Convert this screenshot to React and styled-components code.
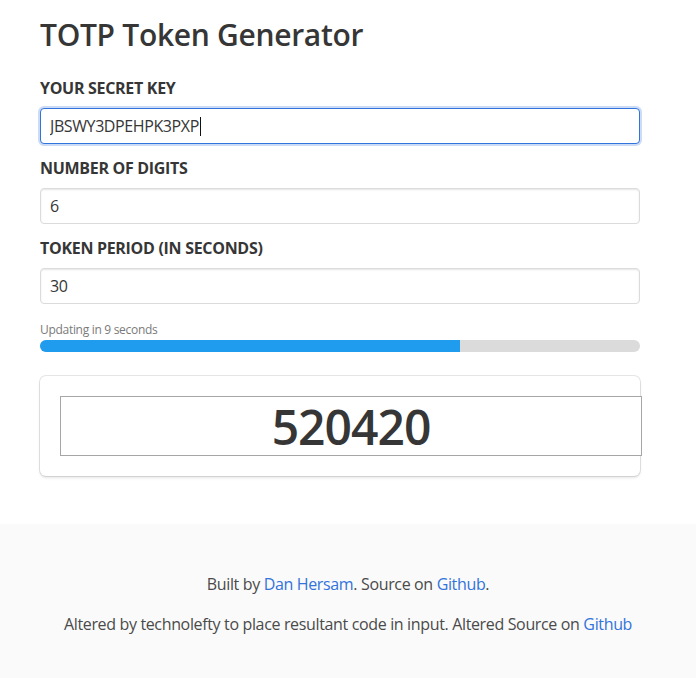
import React from 'react';
import styled, { createGlobalStyle } from 'styled-components';

const GlobalStyle = createGlobalStyle`
  html, body {
    margin: 0;
    padding: 0;
    background: #fff;
  }

  body {
    font-family: 'Open Sans', 'Noto Sans', sans-serif;
    font-size: 16px;
    line-height: 1.5;
    color: #4a4a4a;
  }

  * {
    box-sizing: border-box;
  }
`;

const Page = styled.div`
  min-height: 678px;
  display: flex;
  flex-direction: column;
`;

const Main = styled.section`
  width: 600px;
  margin-left: 40px;
  padding: 17px 0 48px;
`;

const Title = styled.h1`
  margin: 0 0 23px;
  font-size: 30px;
  line-height: 36px;
  font-weight: 600;
  letter-spacing: -0.3px;
  color: #363636;
`;

const Field = styled.div`
  margin-bottom: 12px;
`;

const Label = styled.label`
  display: block;
  margin-bottom: 8px;
  font-size: 16px;
  font-weight: 700;
  letter-spacing: -0.3px;
  text-transform: uppercase;
  color: #363636;
`;

const Control = styled.div`
  position: relative;
`;

const Caret = styled.span`
  position: absolute;
  left: 160px;
  top: 9px;
  width: 1px;
  height: 19px;
  background: #111;
`;

const Input = styled.input`
  display: block;
  width: 100%;
  height: 36px;
  padding: 0 9px;
  font-family: inherit;
  font-size: 16px;
  letter-spacing: -0.4px;
  color: #363636;
  background: #fff;
  border: 1px solid ${p => (p.$focused ? '#3273dc' : '#dbdbdb')};
  border-radius: 4px;
  box-shadow: ${p =>
    p.$focused
      ? '0 0 0 2px rgba(50, 115, 220, 0.25)'
      : 'inset 0 1px 2px rgba(10, 10, 10, 0.1)'};
  outline: none;
`;

const Countdown = styled.div`
  margin-top: 17px;
  font-size: 12px;
  line-height: 18px;
  letter-spacing: -0.3px;
  color: #7a7a7a;
`;

const Progress = styled.div`
  height: 12px;
  margin: 1px 0 24px;
  border-radius: 6px;
  background: #dbdbdb;
  overflow: hidden;
`;

const ProgressFill = styled.div`
  height: 100%;
  background: #209cee;
`;

const Box = styled.div`
  padding: 20px;
  border-radius: 6px;
  background: #fff;
  box-shadow: 0 2px 3px rgba(10, 10, 10, 0.1), 0 0 0 1px rgba(10, 10, 10, 0.1);
`;

const TokenInput = styled.input`
  display: block;
  box-sizing: content-box;
  width: 100%;
  height: 58px;
  padding: 0 10px;
  font-family: inherit;
  font-size: 48px;
  font-weight: 600;
  letter-spacing: -1px;
  text-align: center;
  color: #363636;
  background: #fff;
  border: 1px solid #a6a6a6;
  border-radius: 0;
  outline: none;
`;

const Footer = styled.footer`
  flex: 1;
  padding: 48px 24px 96px;
  background: #fafafa;
  text-align: center;
  letter-spacing: -0.35px;

  p {
    margin: 0 0 16px;
  }

  p:last-child {
    margin-bottom: 0;
  }

  a {
    color: #3273dc;
    text-decoration: none;
  }
`;

export default function App() {
  const remaining = 9;
  const period = 30;
  const progress = 70;

  return (
    <Page>
      <GlobalStyle />
      <Main>
        <Title>TOTP Token Generator</Title>
        <Field>
          <Label>Your secret key</Label>
          <Control>
            <Input $focused readOnly value="JBSWY3DPEHPK3PXP" />
            <Caret />
          </Control>
        </Field>
        <Field>
          <Label>Number of digits</Label>
          <Input readOnly value="6" />
        </Field>
        <Field>
          <Label>Token period (in seconds)</Label>
          <Input readOnly value={period} />
        </Field>
        <Countdown>Updating in {remaining} seconds</Countdown>
        <Progress>
          <ProgressFill style={{ width: `${progress}%` }} />
        </Progress>
        <Box>
          <TokenInput readOnly value="520420" />
        </Box>
      </Main>
      <Footer>
        <p>
          Built by <a href="#">Dan Hersam</a>. Source on <a href="#">Github</a>.
        </p>
        <p>
          Altered by technolefty to place resultant code in input. Altered Source on{' '}
          <a href="#">Github</a>
        </p>
      </Footer>
    </Page>
  );
}
